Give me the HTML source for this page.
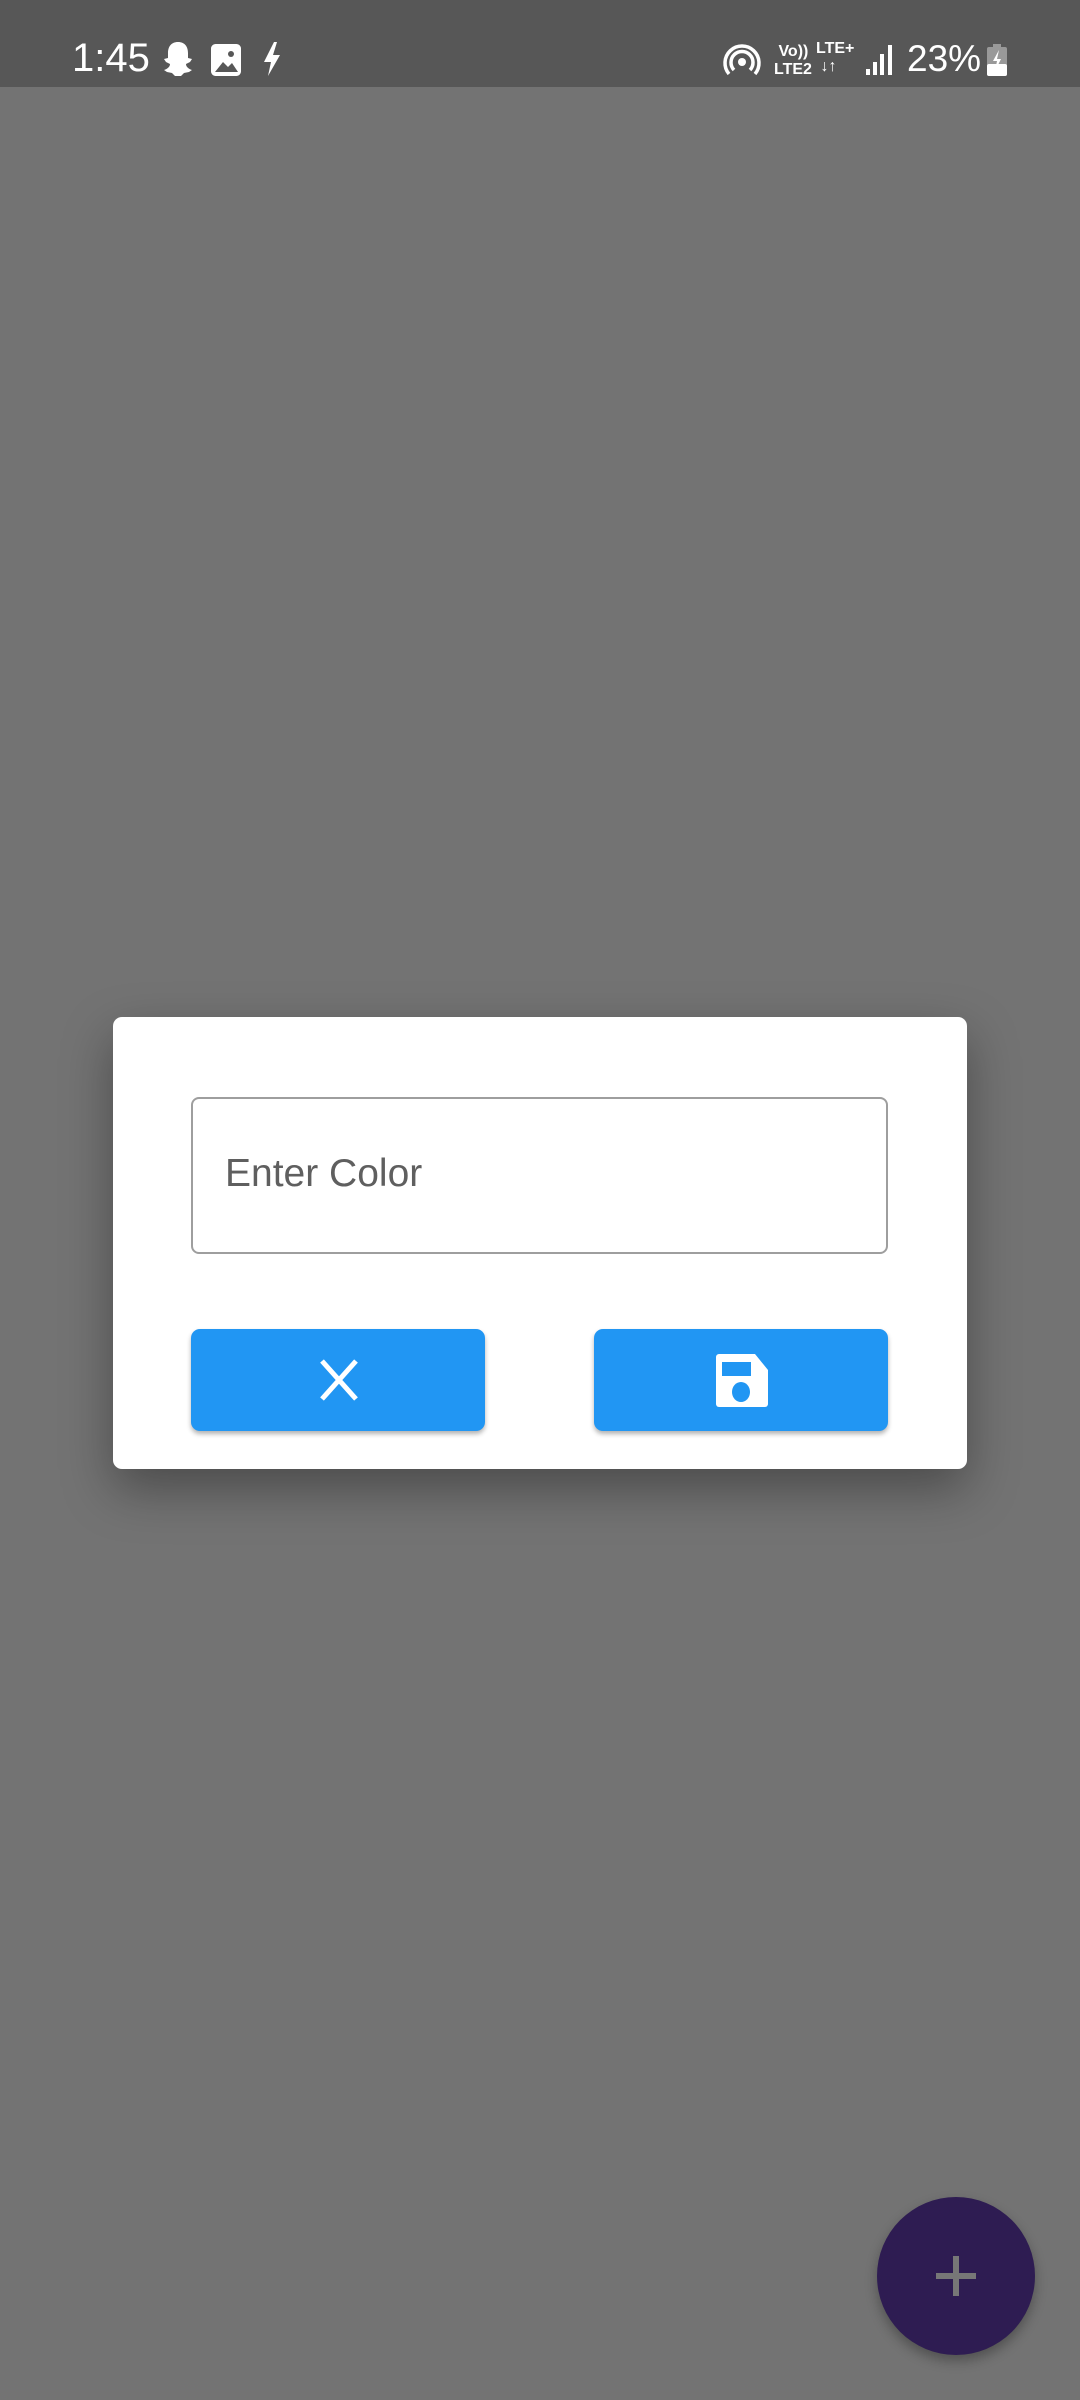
<!DOCTYPE html>
<html><head><meta charset="utf-8"><style>
html,body{margin:0;padding:0}
body{width:1080px;height:2400px;background:#737373;position:relative;overflow:hidden;font-family:"Liberation Sans",sans-serif}
.sb{position:absolute;left:0;top:0;width:1080px;height:87px;background:#575757;color:#fff}
.dlg{position:absolute;left:113px;top:1017px;width:854px;height:452px;background:#fff;border-radius:9px;box-shadow:0 20px 50px rgba(0,0,0,.35)}
.tf{position:absolute;left:78px;top:80px;width:697px;height:157px;border:2.5px solid #9e9e9e;border-radius:8px;box-sizing:border-box}
.tf span{position:absolute;left:32px;top:53px;font-size:39px;color:#5f5f5f}
.btn{position:absolute;top:312px;width:294px;height:102px;background:#2196f3;border-radius:9px;box-shadow:0 3px 5px rgba(0,0,0,.3)}
.fab{position:absolute;left:877px;top:2197px;width:158px;height:158px;border-radius:50%;background:#2e1c52;box-shadow:0 6px 12px rgba(0,0,0,.3)}
</style></head><body>
<div class="sb">
<div style="position:absolute;left:72px;top:36px;font-size:40px;line-height:44px">1:45</div>
<svg style="position:absolute;left:160px;top:40px" width="36" height="38" viewBox="0 0 36 38"><path d="M18 2c7 0 10 5 10 11v5l4 1-2 3-4 2c0 3 3 5 6 6l-3 2-5 1-3 3h-6l-3-3-5-1-3-2c3-1 6-3 6-6l-4-2-2-3 4-1v-5C8 7 11 2 18 2z" fill="#fff"/></svg>
<svg style="position:absolute;left:211px;top:44px" width="30" height="32" viewBox="0 0 30 32"><rect x="1.5" y="1.5" width="27" height="29" rx="3" fill="none" stroke="#fff" stroke-width="3"/><rect x="3" y="3" width="24" height="26" fill="#fff"/><path d="M4 28l8-10 5 5 4-4 6 9z" fill="#575757"/><circle cx="20" cy="10" r="3" fill="#575757"/></svg>
<svg style="position:absolute;left:262px;top:42px" width="20" height="34" viewBox="0 0 20 34"><path d="M12 0L2 20h7l-3 14 12-21h-7l4-13z" fill="#fff"/></svg>
<svg style="position:absolute;left:722px;top:42px" width="40" height="36" viewBox="0 0 40 36"><circle cx="20" cy="20" r="4" fill="#fff"/><path d="M12 28a11 11 0 1 1 16 0M7 32a17 17 0 1 1 26 0" fill="none" stroke="#fff" stroke-width="3.5"/></svg>
<div style="position:absolute;left:774px;top:43px;font-size:16px;font-weight:bold;line-height:18px">&nbsp;Vo))<br>LTE2</div>
<div style="position:absolute;left:816px;top:40px;font-size:16px;font-weight:bold;line-height:18px">LTE+<br>&nbsp;↓↑</div>
<svg style="position:absolute;left:866px;top:45px" width="28" height="30" viewBox="0 0 28 30"><rect x="0" y="24" width="4" height="6" fill="#fff"/><rect x="7" y="17" width="4" height="13" fill="#fff"/><rect x="14" y="9" width="4" height="21" fill="#fff"/><rect x="22" y="0" width="4" height="30" fill="#fff"/></svg>
<div style="position:absolute;left:907px;top:38px;font-size:37px;line-height:42px">23%</div>
<svg style="position:absolute;left:987px;top:44px" width="20" height="32" viewBox="0 0 20 32"><rect x="6" y="0" width="8" height="3" fill="#999"/><rect x="0" y="3" width="20" height="29" rx="2" fill="#999"/><rect x="0" y="20" width="20" height="12" rx="2" fill="#fff"/><path d="M12 6l-6 11h4l-2 10 6-12h-4z" fill="#fff"/></svg>
</div>
<div class="dlg">
<div class="tf"><span>Enter Color</span></div>
<div class="btn" style="left:78px"><svg style="position:absolute;left:128px;top:30px" width="40" height="42" viewBox="0 0 40 42"><path d="M3 2l34 38M37 2L3 40" stroke="#fff" stroke-width="5"/></svg></div>
<div class="btn" style="left:481px"><svg style="position:absolute;left:122px;top:25px" width="52" height="53" viewBox="0 0 52 53"><path d="M3 0h36l13 16v34a3 3 0 0 1-3 3H3a3 3 0 0 1-3-3V3a3 3 0 0 1 3-3z" fill="#fff"/><rect x="6" y="8" width="29" height="14" fill="#2196f3"/><ellipse cx="25" cy="38" rx="9" ry="10" fill="#2196f3"/></svg></div>
</div>
<div class="fab"><div style="position:absolute;left:59px;top:76px;width:40px;height:6px;background:#777"></div><div style="position:absolute;left:76px;top:59px;width:6px;height:40px;background:#777"></div></div>
</body></html>
